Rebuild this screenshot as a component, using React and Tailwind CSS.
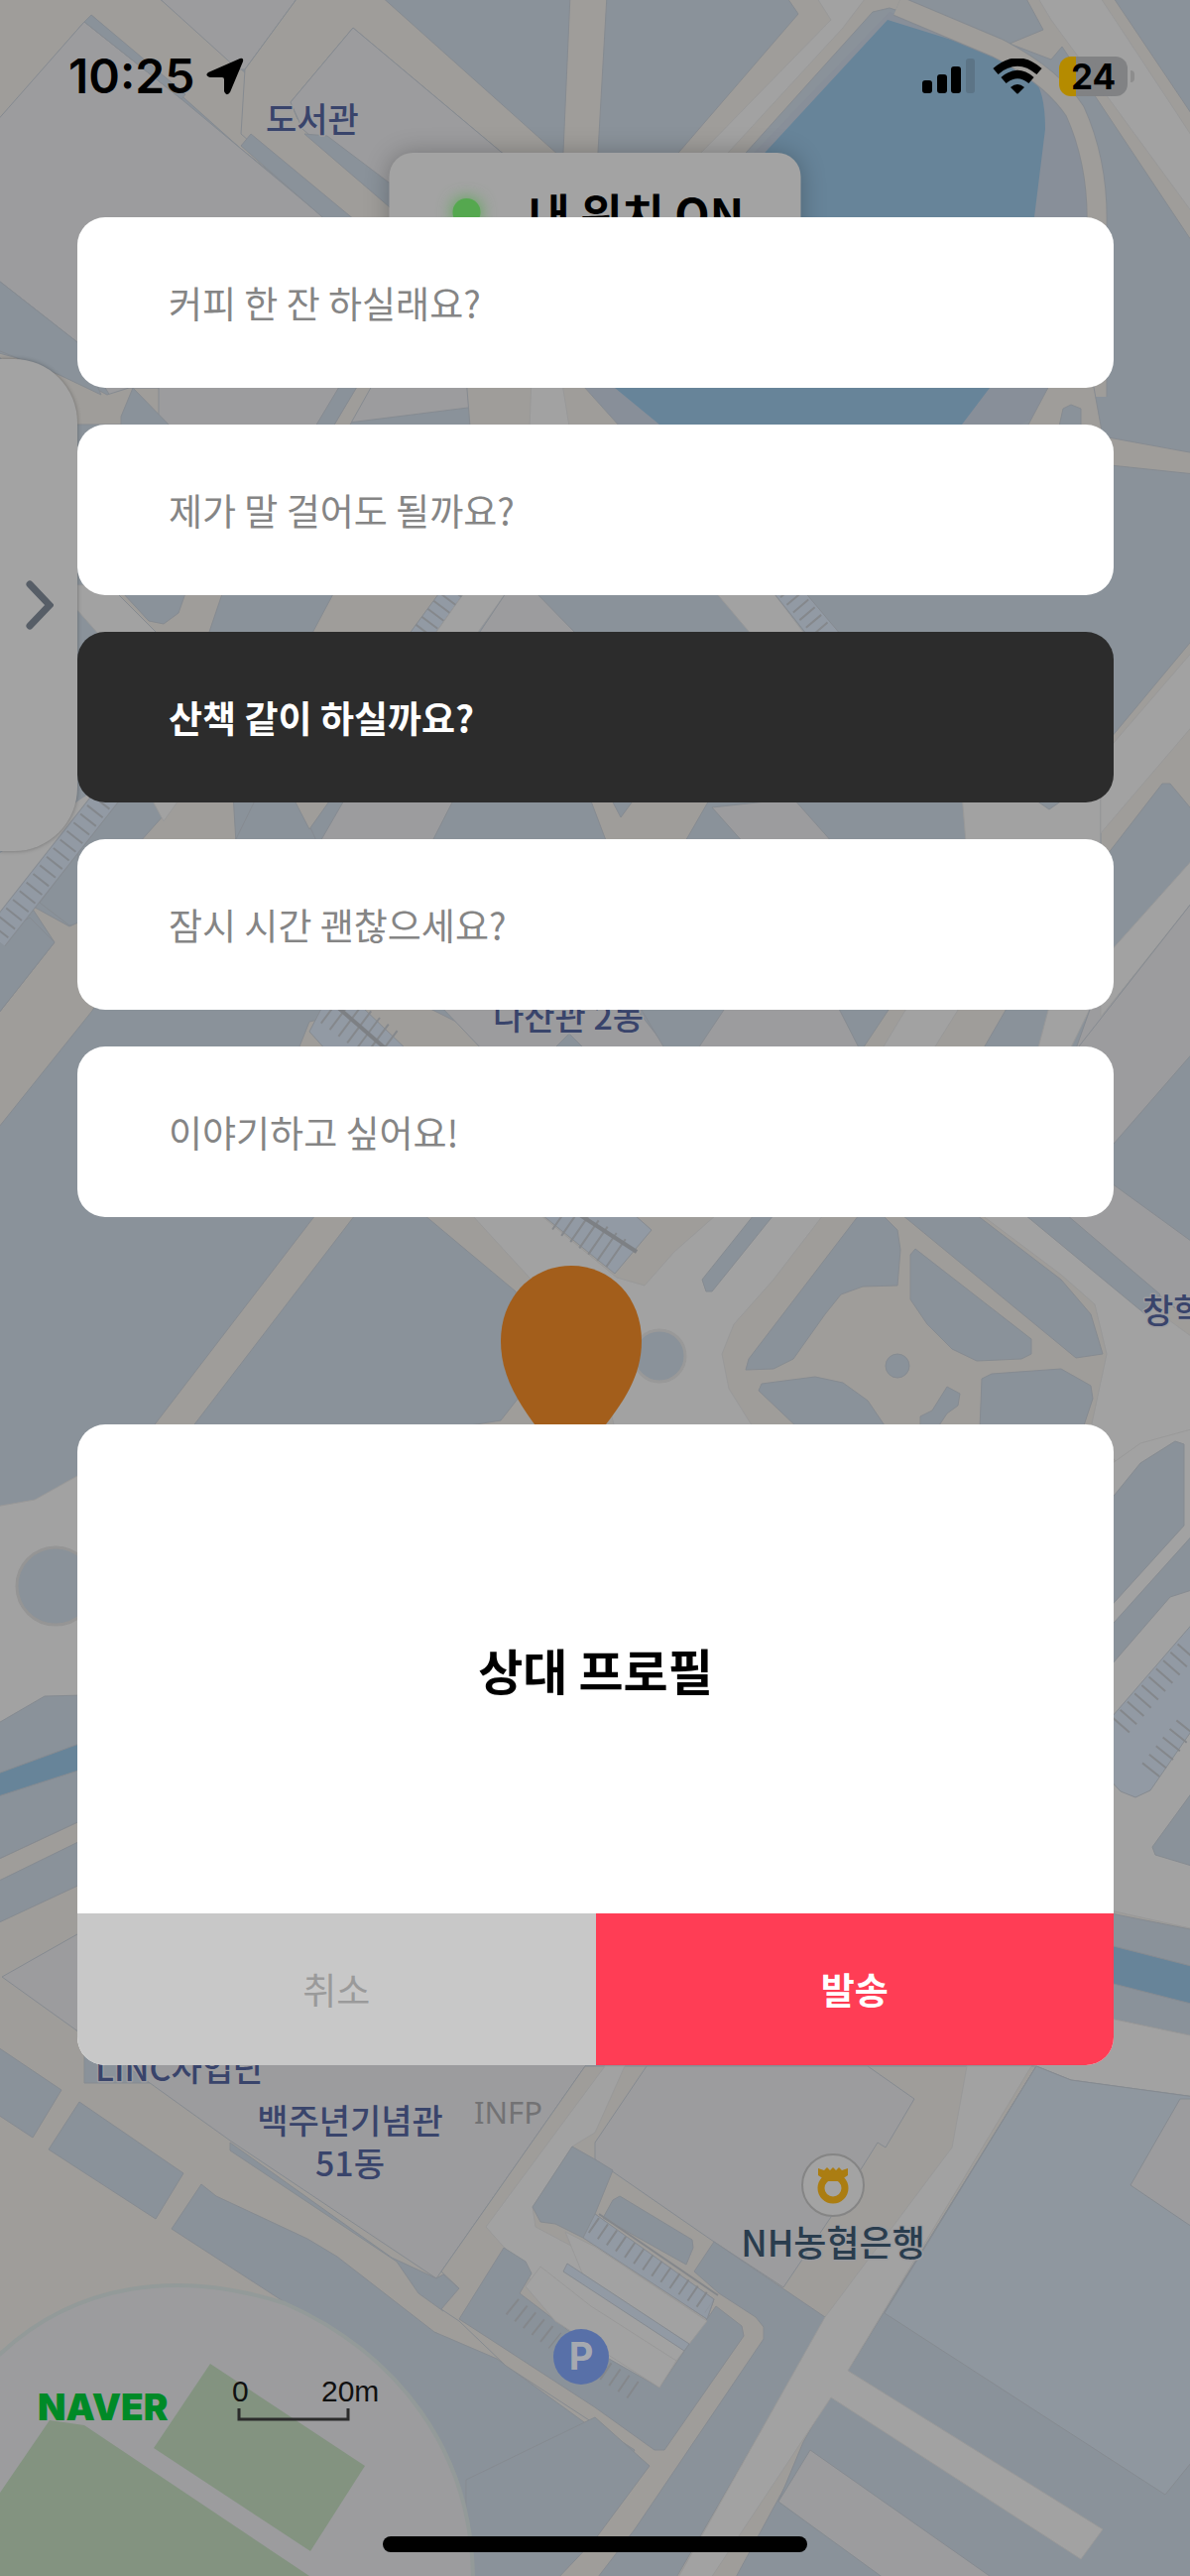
import { useState } from "react";

const messages = [
  { id: "coffee", text: "커피 한 잔 하실래요?" },
  { id: "talk", text: "제가 말 걸어도 될까요?" },
  { id: "walk", text: "산책 같이 하실까요?" },
  { id: "time", text: "잠시 시간 괜찮으세요?" },
  { id: "story", text: "이야기하고 싶어요!" },
];

// map palette, already dimmed
const LAND = "#8a929a";
const ROAD = "#a2a2a2";
const PATH = "#9f9d9a";
const BUILDING = "#9c9c9e";
const WATER = "#678499";
const GRASS = "#839380";
const LOT = "#929aa4";
const EDGE = "#868b91";

// [fill, points]
const northShapes = [
  [PATH, "-5,-5 157,-5 600,380 600,430 470,330 243,150 92,15 85,22 -5,125"],
  [BUILDING, "-5,124 85,22 183,100 243,150 345,235 560,400 320,430 130,430 78,345 -5,280"],
  [LAND, "92,15 98,20 187,95 183,100 85,22"],
  [BUILDING, "157,-5 302,-5 247,70 240,70"],
  [PATH, "302,-5 383,-5 640,225 600,225 505,153 356,28 293,103 300,120 420,225 345,225 243,135 247,70"],
  [BUILDING, "356,28 505,153 590,225 420,230 305,130 293,103"],
  [LAND, "243,147 253,135 370,232 340,232"],
  [LAND, "307,135 330,137 400,190 400,215"],
  [PATH, "575,-5 612,-5 603,153 600,230 562,230 568,153"],
];

const poolShapes = [
  [PATH, "792,-5 805,14 685,153 600,250 680,250 753,153 880,12 897,8 915,14 918,-5"],
  [ROAD, "822,-5 875,-5 850,28 735,153 660,240 640,220 708,153 838,20"],
  [PATH, "1033,-5 1052,30 1018,44 1060,60 1071,47 1205,248 1205,120 1121,-5"],
  [ROAD, "1045,-5 1108,-5 1205,142 1205,218 1060,20"],
];

const gapShapes = [
  // between first and second card
  [PATH, "-5,355 60,372 108,398 130,391 160,391 160,428 60,428"],
  [LAND, "-5,280 78,345 102,398 60,378 -5,352"],
  [LAND, "122,420 134,391 172,430 122,430"],
  [PATH, "365,380 380,380 352,430 336,430"],
  [LAND, "348,380 366,380 336,430 318,430"],
  [PATH, "470,380 580,380 625,430 474,430"],
  [ROAD, "536,380 566,380 574,430 534,430"],
  [PATH, "1060,385 1102,385 1112,440 1205,457 1205,478 1110,468 1085,440 1036,430"],
  [LAND, "1072,412 1080,408 1090,412 1090,430 1068,430"],
  // between second and third card
  [ROAD, "78,590 130,590 160,640 100,640 78,615"],
  [PATH, "110,590 227,590 210,640 160,640"],
  [LAND, "124,598 187,598 180,618 165,629 150,626"],
  [PATH, "338,595 445,595 418,640 314,640"],
  [LOT, "445,595 470,595 438,640 412,640"],
  [ROAD, "470,595 512,595 480,640 438,640"],
  [BUILDING, "512,595 538,595 582,640 482,640"],
  [ROAD, "720,595 778,595 812,640 758,640"],
  [LOT, "778,595 810,595 848,640 814,640"],
  // between third and fourth card
  [PATH, "160,800 235,800 238,850 140,850 165,822"],
  [ROAD, "150,800 185,800 165,828"],
  [LAND, "258,805 300,805 320,850 236,850"],
  [PATH, "296,805 334,805 312,836"],
  [BUILDING, "348,805 458,805 435,850 322,850"],
  [PATH, "595,805 716,805 690,850 612,850"],
  [LAND, "616,805 640,805 626,824"],
  [BUILDING, "718,814 800,805 840,850 750,850"],
  [ROAD, "970,800 1130,800 1110,850 974,850"],
  [LAND, "1042,805 1074,805 1058,816"],
  // between fourth and fifth card
  [PATH, "300,1060 312,1030 380,1015 430,1015 520,1060"],
  [LOT, "325,1015 365,1015 412,1060 330,1060 312,1040"],
  [BUILDING, "445,1015 640,1015 675,1060 488,1060"],
  [LAND, "645,1015 735,1015 705,1060 672,1060"],
  [LAND, "556,1060 574,1042 592,1060"],
  [BUILDING, "732,1015 845,1015 868,1060 702,1060"],
  [PATH, "898,1015 1016,1015 990,1060 868,1060"],
  [ROAD, "915,1015 968,1015 940,1060 888,1060"],
  [ROAD, "1058,1015 1100,1015 1078,1060 1046,1060"],
  [BUILDING, "1100,1015 1128,1000 1128,1060 1084,1060"],
];

const eastShapes = [
  [PATH, "1110,756 1205,642 1205,820 1180,790 1172,790 1110,870"],
  [ROAD, "1110,764 1205,654 1205,729 1110,840"],
  [ROAD, "1110,970 1205,864 1205,906 1110,1025"],
  [BUILDING, "1084,1060 1205,906 1205,1059 1110,1168 1084,1168"],
  [BUILDING, "1110,1185 1205,1254 1205,1334 1060,1220"],
];

const centerShapes = [
  [PATH, "318,1225 358,1225 193,1440 153,1440"],
  [PATH, "428,1225 1060,1225 1205,1334 1205,2130 1100,2130 1000,1460 455,1440 505,1432 530,1400 520,1302"],
  [ROAD, "476,1225 545,1225 622,1288 650,1296 680,1262 722,1225 830,1225 780,1290 740,1335 728,1365 735,1400 760,1440 620,1440 600,1360"],
  [ROAD, "990,1225 1034,1225 1205,1350 1205,1445 1130,1480 1100,1440 1116,1365 1104,1315 1070,1285"],
  [LOT, "547,1225 640,1225 657,1240 620,1284"],
  [LAND, "760,1225 780,1225 718,1302 712,1302 708,1290"],
  [LAND, "1034,1225 1076,1225 1170,1305 1155,1325"],
  [LAND, "866,1225 890,1225 905,1240 908,1260 905,1296 870,1297 848,1305 832,1325 800,1370 780,1380 752,1381 755,1370"],
  [LAND, "923,1259 1040,1350 1040,1365 1030,1370 985,1372 960,1360 935,1335 918,1310 918,1265"],
  [LAND, "910,1225 985,1225 1070,1290 1100,1325 1112,1365 1085,1369"],
  [LAND, "768,1395 822,1388 850,1394 875,1412 894,1440 805,1440 765,1402"],
  [LAND, "990,1390 1000,1385 1070,1380 1100,1397 1102,1410 1092,1440 988,1440"],
  [LAND, "955,1398 968,1405 966,1417 955,1425 945,1440 928,1440 928,1428 940,1422"],
];

const lowerShapes = [
  // right margin
  [ROAD, "1115,1480 1150,1455 1205,1440 1205,1945 1115,1925"],
  [LAND, "1115,1518 1150,1475 1185,1453 1194,1456 1194,1538 1115,1625"],
  [LAND, "1115,1645 1205,1545 1205,1602 1180,1610 1115,1685"],
  [LOT, "1115,1738 1205,1634 1205,1740 1160,1805 1145,1812 1130,1806 1115,1790"],
  [LAND, "1162,1862 1205,1803 1205,1882 1165,1870"],
  [LAND, "1115,1928 1205,1946 1205,2053 1115,2034"],
  [WATER, "1115,1960 1205,1983 1205,2021 1115,1998"],
  [ROAD, "1115,2034 1205,2053 1205,2120 1080,2110 1040,2080"],
  // left margin
  [ROAD, "-5,1519 35,1512 85,1484 85,1712 -5,1740"],
  [LAND, "-5,1739 45,1710 85,1709 85,1834 -5,1876"],
  [WATER, "-5,1789 85,1756 85,1783 -5,1812"],
  [PATH, "-5,1876 85,1834 85,2100 600,2100 600,2460 440,2352 287,2321 -5,2400"],
  [LAND, "-5,1898 85,1854 85,1898 -5,1940"],
  [BUILDING, "2,1993 85,1946 600,2070 590,2083 445,2290 440,2297 232,2158"],
];

const southShapes = [
  [LAND, "-5,2062 62,2107 33,2155 -5,2130"],
  [LAND, "80,2119 185,2191 157,2237 49,2167"],
  [LAND, "203,2202 218,2214 310,2257 340,2275 438,2351 501,2378 600,2450 680,2500 640,2602 470,2602 300,2330 287,2321 173,2247"],
  [LAND, "232,2160 395,2276 440,2297 447,2293 463,2307 447,2330 422,2312 400,2280 232,2168"],
  [PATH, "590,2083 1045,2083 855,2390 740,2602 556,2602 640,2470 510,2385 463,2340 445,2328 463,2307 445,2290"],
  [ROAD, "610,2083 630,2083 600,2150 577,2164 537,2225 540,2245 700,2330 695,2363 682,2380 665,2407 570,2360 530,2290 490,2245"],
  [BUILDING, "652,2083 875,2083 922,2116 893,2165 885,2160 838,2235 790,2306 720,2260 600,2177 600,2160"],
  [LAND, "577,2164 600,2177 618,2188 600,2232 640,2262 720,2318 713,2338 600,2262 560,2242 545,2240 537,2225"],
  [LAND, "625,2214 698,2258 699,2266 692,2283 608,2236 618,2218"],
  [LAND, "720,2260 832,2336 820,2360 680,2602 600,2602 640,2550 770,2358 770,2346 762,2336 725,2312 700,2290"],
  [LAND, "508,2266 530,2280 536,2292 524,2312 600,2370 665,2407 695,2363 713,2338 722,2325 748,2345 750,2355 670,2470 660,2470 600,2427 500,2362 463,2338"],
  [LOT, "600,2232 720,2318 713,2338 588,2256"],
  [ROAD, "600,2265 713,2340 695,2363 588,2294 570,2250"],
  [ROAD, "596,2325 682,2380 665,2407 560,2340 530,2305 545,2285"],
  [LOT, "572,2282 695,2363 690,2370 568,2290"],
  [LAND, "600,2437 655,2486 600,2560 560,2602 470,2602 470,2500"],
  [LAND, "1045,2083 1080,2097 1205,2114 1205,2602 898,2602 785,2522 810,2462 835,2418 855,2390"],
  ["#8f979f", "1045,2083 1080,2097 1205,2114 1205,2478 1175,2515 892,2332"],
  [BUILDING, "1190,2116 1205,2116 1205,2247 1140,2203"],
  [ROAD, "975,2083 1040,2083 855,2390 1112,2550 1090,2580 838,2417 715,2602 682,2602 832,2336 960,2165"],
  [BUILDING, "817,2470 1005,2602 895,2602 785,2522"],
];

function Shapes({ items }) {
  return items.map(([fill, points]) => (
    <polygon key={points} points={points} fill={fill} stroke={fill === ROAD ? "#999" : EDGE} strokeWidth="1" />
  ));
}

function MapView() {
  return (
    <svg
      className="absolute inset-0 h-full w-full"
      viewBox="0 0 1200 2597"
      preserveAspectRatio="xMidYMid slice"
      aria-label="지도"
      role="img"
    >
      <rect width="1200" height="2597" fill={LAND} />
      <Shapes items={northShapes} />
      <path
        d="M897 12 L990 48 Q1050 72 1075 110 Q1110 170 1106 260 L1080 400 L990 450 L640 450 L590 391 L620 300 Z"
        fill="#888f99"
      />
      <Shapes items={poolShapes} />
      <path
        d="M895 20 L773 152 L640 300 Q600 350 620 391 L665 428 Q800 520 970 428 L998 391 L1043 219 L1054 130 Q1054 90 1040 76 Q1020 58 985 48 Z"
        fill={WATER}
      />
      <path
        d="M905 6 L1005 48 Q1060 76 1084 112 Q1108 165 1106 230 L1106 400"
        fill="none"
        stroke={EDGE}
        strokeWidth="21"
      />
      <path
        d="M905 6 L1005 48 Q1060 76 1084 112 Q1108 165 1106 230 L1106 400"
        fill="none"
        stroke={PATH}
        strokeWidth="19"
      />
      <Shapes items={gapShapes} />
      <Shapes items={eastShapes} />

      {/* stairs and side road on the left */}
      <polygon points="0,860 90,800 110,805 0,955" fill={ROAD} />
      <polygon points="40,910 78,860 90,930 70,933" fill={LAND} stroke={EDGE} />
      <polygon points="30,912 70,934 90,925 110,990 93,1019 -5,1141 -5,1026 55,950" fill={PATH} stroke={EDGE} />
      <polygon points="-5,945 30,925 55,950 -5,1026" fill={LAND} stroke={EDGE} />
      <path d="M110 800 L-5 946" stroke={EDGE} strokeWidth="26" />
      <path d="M110 800 L-5 946" stroke={LOT} strokeWidth="24" />
      <path d="M110 800 L-5 946" stroke="#83878c" strokeWidth="20" strokeDasharray="2 9" />

      <Shapes items={centerShapes} />
      <circle cx="905" cy="1377" r="12" fill={LAND} stroke={EDGE} />
      <circle cx="665" cy="1367" r="26" fill={LAND} stroke="#999" strokeWidth="3" />
      <path d="M566 1225 L628 1268" stroke="#85888c" strokeWidth="34" strokeDasharray="2 9" />
      <path d="M585 1225 L642 1262" stroke="#7d8084" strokeWidth="4" />
      <path d="M335 1015 L395 1060" stroke="#85888c" strokeWidth="40" strokeDasharray="2 9" />
      <path d="M340 1015 L392 1060" stroke="#7d8084" strokeWidth="4" />
      <path d="M458 595 L424 640" stroke="#85888c" strokeWidth="20" strokeDasharray="2 8" />
      <path d="M794 595 L832 640" stroke="#85888c" strokeWidth="20" strokeDasharray="2 8" />

      {/* location pin */}
      <path
        d="M576 1276 C536 1276 505 1308 505 1352 C505 1388 524 1416 542 1440 L608 1440 C628 1414 647 1388 647 1352 C647 1308 616 1276 576 1276 Z"
        fill="#a35e1b"
      />

      <Shapes items={lowerShapes} />
      <circle cx="56" cy="1599" r="39" fill={LAND} stroke="#959595" strokeWidth="3" />
      <path d="M1130 1740 L1200 1660" stroke="#84878b" strokeWidth="22" strokeDasharray="2 9" />
      <path d="M1160 1785 L1200 1735" stroke="#84878b" strokeWidth="22" strokeDasharray="2 9" />

      <Shapes items={southShapes} />
      <path d="M598 2243 L716 2324" stroke="#84878b" strokeWidth="18" strokeDasharray="2 9" />
      <path d="M604 2232 L724 2314" stroke="#84878b" strokeWidth="2" />
      <path d="M516 2325 L560 2360" stroke="#84878b" strokeWidth="20" strokeDasharray="2 9" />
      <path d="M610 2390 L645 2414" stroke="#84878b" strokeWidth="20" strokeDasharray="2 9" />

      {/* sports field */}
      <path
        d="M-5 2378 C75 2300 180 2288 287 2322 C400 2372 477 2470 477 2602 L-5 2602 Z"
        fill={BUILDING}
        stroke="#939a99"
        strokeWidth="4"
      />
      <polygon points="0,2513 50,2440 85,2445 312,2597 0,2597" fill={GRASS} />
      <polygon points="212,2383 368,2486 313,2572 155,2468" fill={GRASS} />

      <circle cx="586" cy="2376" r="28" fill="#5870a8" />
      <circle cx="840" cy="2203" r="31" fill="#a3a3a3" stroke="#858585" strokeWidth="2" />
      <circle cx="840" cy="2206" r="12" fill="none" stroke="#ab7d12" strokeWidth="7" />
      <path d="M825 2186 l6 2 l3 -3 l3 3 l3 -3 l3 3 l3 -3 l3 3 l6 -2 v7 l-9 6 h-12 l-9 -6 Z" fill="#ab7d12" />

      <g
        fontFamily="'Noto Sans CJK KR', sans-serif"
        fontSize="34"
        fontWeight="500"
        fill="#39446b"
        stroke="#9c9c9f"
        strokeWidth="3"
        strokeLinejoin="round"
        paintOrder="stroke"
      >
        <text x="268" y="133">도서관</text>
        <text x="497" y="1038">다산관 2동</text>
        <text x="1152" y="1334">창학관</text>
        <text x="96" y="2098">LINC사업단</text>
        <text x="353" y="2151" textAnchor="middle">백주년기념관</text>
        <text x="353" y="2194" textAnchor="middle">51동</text>
        <text x="840" y="2275" textAnchor="middle" fontSize="36" fill="#2a3d4e">NH농협은행</text>
      </g>
      <text x="586" y="2389" textAnchor="middle" fontFamily="Inter, sans-serif" fontSize="38" fontWeight="700" fill="#a6a9b0">P</text>
      <text x="478" y="2141" fontFamily="'Noto Sans', sans-serif" fontSize="31" fill="#727274">INFP</text>

      <text x="38" y="2440" fontFamily="Inter, sans-serif" fontSize="37" fontWeight="900" fill="#008a27">NAVER</text>
      <g fontFamily="'Liberation Sans', sans-serif" fontSize="30" fill="#111">
        <text x="234" y="2421">0</text>
        <text x="324" y="2421">20m</text>
      </g>
      <path d="M241 2428 V2439 H351 V2428" fill="none" stroke="#2b2b2b" strokeWidth="3" />
    </svg>
  );
}

function StatusBar() {
  return (
    <header className="flex h-[219px] items-start justify-between pt-[53px] pr-[56px] pl-[69px]">
      <div className="flex h-12 items-center gap-3">
        <time className="font-[Inter] text-[48px] leading-[48px] font-semibold">10:25</time>
        <svg className="h-[38px] w-[38px]" viewBox="0 0 38 38" aria-hidden="true">
          <path d="M2 15 L34 1 Q38 0 37 4 L24 35 Q20 40 18 34 V22 Q18 20 16 20 H4 Q-2 18 2 15 Z" />
        </svg>
      </div>
      <div className="flex h-12 items-center gap-[17px]">
        <svg className="h-9 w-[54px]" viewBox="0 0 54 36" aria-hidden="true">
          <rect x="0" y="22" width="10" height="13" rx="3" />
          <rect x="15" y="16" width="10" height="19" rx="3" />
          <rect x="29" y="8" width="10" height="27" rx="3" />
          <rect x="44" y="0" width="9" height="35" rx="3" fill="#5c7486" />
        </svg>
        <svg className="h-9 w-[50px]" viewBox="0 0 50 36" aria-hidden="true">
          <g fill="none" stroke="#000" strokeWidth="8">
            <path d="M3 13 Q25 -6 47 13" />
            <path d="M11 22 Q25 10 39 22" />
          </g>
          <path d="M18 29 Q25 23 32 29 L26 35 Q25 36 24 35 Z" />
        </svg>
        <div className="flex items-center gap-[3px]">
          <div className="flex h-10 w-[69px] items-center justify-center rounded-xl bg-linear-to-r from-[#b58b00] from-25% to-[#818284] to-25%">
            <span className="font-[Inter] text-[35px] leading-10 font-bold">24</span>
          </div>
          <span className="h-3 w-1 rounded-r-full bg-[#8d8d8d]" />
        </div>
      </div>
    </header>
  );
}

export default function App() {
  const [selected, setSelected] = useState("walk");
  const [located, setLocated] = useState(true);

  return (
    <div className="relative flex min-h-screen flex-col overflow-hidden bg-[#8a929a] font-['Noto_Sans_CJK_KR',sans-serif] text-black">
      <MapView />

      {/* location toggle floating over the map */}
      <button
        type="button"
        role="switch"
        aria-checked={located}
        onClick={() => setLocated(!located)}
        className="absolute top-[154px] left-1/2 flex h-[120px] w-[415px] -translate-x-1/2 items-center gap-12 rounded-3xl bg-[#a3a3a3] pl-16 shadow-[0_0_24px_rgba(0,0,0,0.25)]"
      >
        <span className="h-7 w-7 rounded-full bg-[#55a84f] shadow-[0_0_16px_#55a84f]" />
        <span className="text-[46px] font-bold">내 위치 {located ? "ON" : "OFF"}</span>
      </button>

      {/* drawer handle */}
      <button
        type="button"
        aria-label="메뉴 열기"
        className="absolute top-[362px] left-0 flex h-[496px] w-[78px] items-center justify-end rounded-r-[64px] bg-[#a3a3a3] pr-6 shadow-[0_0_4px_rgba(0,0,0,0.3)]"
      >
        <svg className="h-[50px] w-7" viewBox="0 0 28 50" fill="none" stroke="#575e67" strokeWidth="7" strokeLinecap="round" aria-hidden="true">
          <path d="M4 4 L24 25 L4 46" />
        </svg>
      </button>

      <div className="relative flex grow flex-col">
        <StatusBar />

        <main className="pr-[77px] pl-[78px]">
          <fieldset className="flex flex-col gap-[37px]">
            <legend className="sr-only">메시지 선택</legend>
            {messages.map((m) => (
              <label
                key={m.id}
                className="block cursor-pointer rounded-[28px] bg-white px-[92px] py-[60px] text-[37px] leading-[52px] text-[#858585] has-checked:bg-[#2c2c2c] has-checked:font-bold has-checked:text-white"
              >
                <input
                  type="radio"
                  name="message"
                  value={m.id}
                  checked={selected === m.id}
                  onChange={() => setSelected(m.id)}
                  className="sr-only"
                />
                {m.text}
              </label>
            ))}
          </fieldset>

          <section className="mt-[209px] overflow-hidden rounded-[28px] bg-white">
            <h2 className="flex h-[493px] items-center justify-center text-[49px] font-bold">상대 프로필</h2>
            <div className="grid grid-cols-2 text-[37px] leading-[53px]">
              <button type="button" className="bg-[#c8c8c8] py-[50px] text-[#9a9a9a]">
                취소
              </button>
              <button type="button" className="bg-[#ff3d55] py-[50px] font-bold text-white">
                발송
              </button>
            </div>
          </section>
        </main>

        <div className="mx-auto mt-auto mb-6 h-4 w-[428px] rounded-full bg-black" />
      </div>
    </div>
  );
}
